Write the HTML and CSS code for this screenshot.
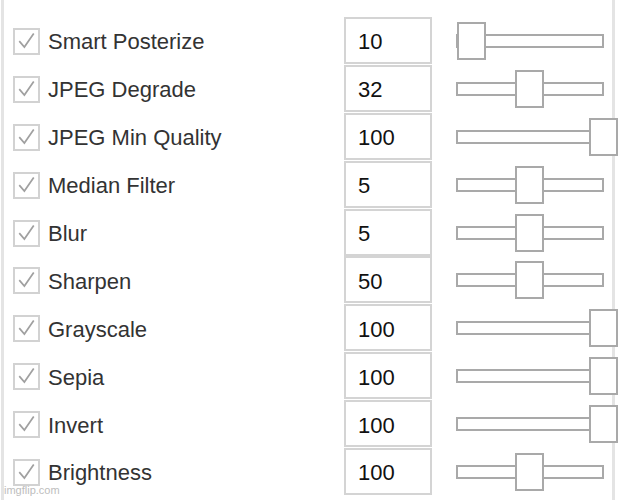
FILE: index.html
```html
<!DOCTYPE html>
<html lang="en">
<head>
  <meta charset="UTF-8" />
  <title>Filters</title>
  <link rel="stylesheet" href="styles.css">
</head>
<body>
  <div class="panel">
    <div class="row">
      <span class="check"><svg viewBox="0 0 27 27"><polyline points="5,13 11,20 22,4" /></svg></span>
      <span class="label">Smart Posterize</span>
      <span class="value">10</span>
      <span class="slider"><span class="thumb" style="left: 1px"></span></span>
    </div>
    <div class="row">
      <span class="check"><svg viewBox="0 0 27 27"><polyline points="5,13 11,20 22,4" /></svg></span>
      <span class="label">JPEG Degrade</span>
      <span class="value">32</span>
      <span class="slider"><span class="thumb" style="left: 59px"></span></span>
    </div>
    <div class="row">
      <span class="check"><svg viewBox="0 0 27 27"><polyline points="5,13 11,20 22,4" /></svg></span>
      <span class="label">JPEG Min Quality</span>
      <span class="value">100</span>
      <span class="slider"><span class="thumb" style="left: 133px"></span></span>
    </div>
    <div class="row">
      <span class="check"><svg viewBox="0 0 27 27"><polyline points="5,13 11,20 22,4" /></svg></span>
      <span class="label">Median Filter</span>
      <span class="value">5</span>
      <span class="slider"><span class="thumb" style="left: 59px"></span></span>
    </div>
    <div class="row">
      <span class="check"><svg viewBox="0 0 27 27"><polyline points="5,13 11,20 22,4" /></svg></span>
      <span class="label">Blur</span>
      <span class="value">5</span>
      <span class="slider"><span class="thumb" style="left: 59px"></span></span>
    </div>
    <div class="row">
      <span class="check"><svg viewBox="0 0 27 27"><polyline points="5,13 11,20 22,4" /></svg></span>
      <span class="label">Sharpen</span>
      <span class="value">50</span>
      <span class="slider"><span class="thumb" style="left: 59px"></span></span>
    </div>
    <div class="row">
      <span class="check"><svg viewBox="0 0 27 27"><polyline points="5,13 11,20 22,4" /></svg></span>
      <span class="label">Grayscale</span>
      <span class="value">100</span>
      <span class="slider"><span class="thumb" style="left: 133px"></span></span>
    </div>
    <div class="row">
      <span class="check"><svg viewBox="0 0 27 27"><polyline points="5,13 11,20 22,4" /></svg></span>
      <span class="label">Sepia</span>
      <span class="value">100</span>
      <span class="slider"><span class="thumb" style="left: 133px"></span></span>
    </div>
    <div class="row">
      <span class="check"><svg viewBox="0 0 27 27"><polyline points="5,13 11,20 22,4" /></svg></span>
      <span class="label">Invert</span>
      <span class="value">100</span>
      <span class="slider"><span class="thumb" style="left: 133px"></span></span>
    </div>
    <div class="row">
      <span class="check"><svg viewBox="0 0 27 27"><polyline points="5,13 11,20 22,4" /></svg></span>
      <span class="label">Brightness</span>
      <span class="value">100</span>
      <span class="slider"><span class="thumb" style="left: 59px"></span></span>
    </div>
  </div>
  <div class="watermark">imgflip.com</div>
</body>
</html>
```

FILE: styles.css
```css
body { margin: 0; background: #fff; font-family: "Liberation Sans", Arial, sans-serif; overflow: hidden; }
.panel {
  margin-left: 1px;
  width: 608px;
  height: 500px;
  border-left: 3px solid #e4e4e4;
  border-right: 3px solid #e4e4e4;
  padding-top: 17px;
  box-sizing: content-box;
}
.row { display: flex; align-items: center; height: 47.9px; }
.check {
  width: 27px;
  height: 27px;
  margin-left: 9px;
  margin-top: 1px;
  border: 2px solid #d2d2d2;
  box-sizing: border-box;
  display: flex;
}
.check svg { width: 100%; height: 100%; }
.check polyline { fill: none; stroke: #a0a0a0; stroke-width: 2; }
.label { width: 296px; margin-left: 8px; padding-top: 3px; font-size: 22px; color: #333; }
.value {
  width: 88px;
  height: 47px;
  margin-top: -1px;
  border: 2px solid #d4d4d4;
  box-sizing: border-box;
  padding-left: 12px;
  padding-top: 4px;
  display: flex;
  align-items: center;
  font-size: 22px;
  color: #111;
}
.slider {
  position: relative;
  width: 148px;
  height: 14px;
  margin-left: 24px;
  border: 2px solid #a9a9a9;
  box-sizing: border-box;
  background: #fff;
}
.thumb {
  position: absolute;
  top: -14px;
  width: 29px;
  height: 38px;
  border: 2px solid #a9a9a9;
  box-sizing: border-box;
  background: #fff;
  margin-left: -2px;
  z-index: 2;
}
.watermark {
  position: absolute;
  left: 4px;
  top: 484px;
  font-size: 11px;
  color: #bdbdbd;
}
```
